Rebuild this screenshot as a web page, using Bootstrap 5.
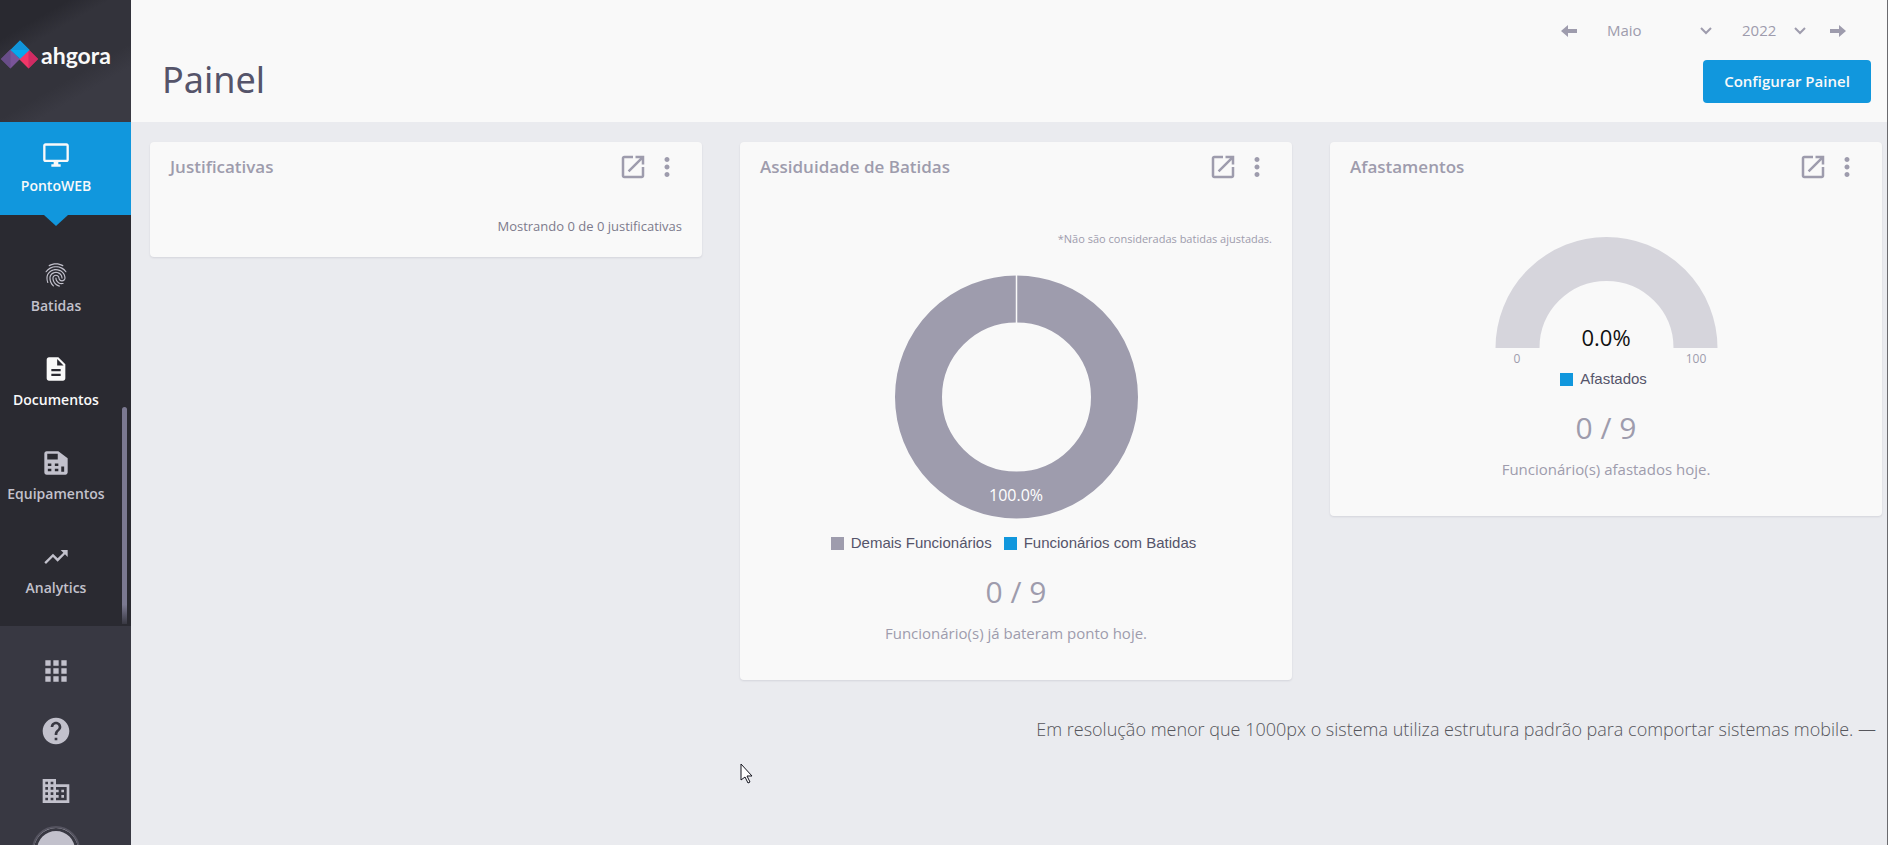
<!DOCTYPE html>
<html lang="pt-BR">
<head>
<meta charset="utf-8">
<meta name="viewport" content="width=device-width, initial-scale=1">
<title>Painel - Ahgora</title>
<link href="https://cdn.jsdelivr.net/npm/bootstrap@5.3.0/dist/css/bootstrap.min.css" rel="stylesheet">
<style>
:root { --brand: #1197dd; --muted: #9e9cad; --dark: #2a2a31; --panel: #383842; --light-icon: #c2c1cc; }
body { font-family: "Open Sans", "Noto Sans", sans-serif; background: #eaebef; color: var(--muted); font-size: 15px; line-height: 20px; }
.page { border-right: 1px solid #6b6b6f; }
a { text-decoration: none; }
.sidebar { width: 131px; background: var(--dark); }
.brand-box { height: 122px; background: linear-gradient(150deg, #292930 20%, #33333b 32%, #33333b 60%, #3a3a43 72%); padding: 0 0 12px 1px; }
.brand-name { fill: #f9f9f9; font: 700 23px Lato, sans-serif; }
.menu-item { height: 94px; padding: 19px 19px 0 0; font-size: 14px; font-weight: 600; color: var(--light-icon); gap: 7px; }
.menu-item svg, .tool-link svg { width: 28px; height: 28px; fill: currentColor; }
.menu-item.current { background: var(--brand); color: #f9f9f9; height: 93px; margin-bottom: 27px; }
.menu-item.current::after { content: ""; position: absolute; top: 100%; left: 44px; border: 12px solid transparent; border-top: 11px solid var(--brand); border-bottom: 0; }
.menu-item.bright { color: #f9f9f9; }
.scroll-thumb { width: 5px; top: 285px; bottom: 2px; right: 4px; border-radius: 3px 3px 0 0; background: linear-gradient(#7b7991 91%, #383842); }
.tools { background: var(--panel); height: 219px; padding: 15px 19px 0 0; }
.tool-link { height: 60px; flex: none; color: var(--light-icon); }
.tool-link .apps { width: 32px; height: 32px; }
.avatar { width: 48px; height: 48px; flex: none; border: 2px solid #54535f; border-radius: 50%; background: var(--light-icon); box-shadow: inset 0 0 0 3px var(--panel); margin-top: 5px; padding: 0; }
.topbar { background: #f9f9f9; height: 122px; padding: 18px 16px 18px 31px; }
.topbar h1 { font: 400 36px/48px "Noto Sans", sans-serif; color: #55546a; margin: 0; }
.period { gap: 30px; padding-right: 25px; }
.period button { border: 0; background: none; padding: 0; line-height: 0; color: var(--muted); }
.period svg { width: 16px; height: 16px; fill: currentColor; }
.period select { appearance: none; border: 0; padding: 0 0 2px; height: 26px; color: var(--muted); font-size: 15px; background: url("data:image/svg+xml,%3Csvg xmlns='http://www.w3.org/2000/svg' width='12' height='8'%3E%3Cpath d='M1 1l5 5 5-5' fill='none' stroke='%239e9cad' stroke-width='2'/%3E%3C/svg%3E") no-repeat right 9px; }
.month { width: 105px; }
.year { width: 64px; }
.period button:last-child { margin-left: -6px; }
.btn-brand { --bs-btn-bg: var(--brand); --bs-btn-color: #f9f9f9; --bs-btn-hover-bg: #0d84c3; --bs-btn-hover-color: #fff; height: 43px; width: 168px; padding: 0; border: 0; font-size: 15px; font-weight: 600; border-radius: 4px; }
.board { padding: 20px 5px 0 19px; gap: 38px; }
.widget { flex: 1 1 0; min-width: 0; background: #f9f9f9; border-radius: 4px; padding: 9px 20px 37px; box-shadow: 0 1px 2px rgba(60,60,80,.12); }
.widget-head { height: 32px; }
.widget h2 { font-size: 17px; line-height: 24px; font-weight: 600; margin: 0; }
.widget-head a, .widget-head button { color: var(--muted); border: 0; background: none; padding: 0; line-height: 0; }
.widget-head svg { width: 30px; height: 30px; fill: currentColor; }
.widget-head .actions { gap: 4px; }
.short { padding-bottom: 21px; }
.short p { font-size: 13px; margin: 33px 0 0; color: #7d7b8c; }
.hint { font-size: 11px; margin: 46px 0 0; }
.donut { width: 244px; height: 244px; margin: 26px 0 14px; }
.gauge { width: 224px; height: 132px; margin-top: 54px; }
.legend-row { font: 15px/20px "Liberation Sans", Arial, sans-serif; color: #55546a; gap: 12px; padding-right: 5px; }
.legend-row span { gap: 7px; }
.legend-row i { width: 13px; height: 13px; background: var(--muted); }
.legend-row i.blue { background: var(--brand); }
.total { font-size: 30px; line-height: 40px; margin-top: 19px; }
.caption-text { margin: 11px 0 0; }
.notice { font-size: 18px; font-weight: 300; line-height: 26px; color: #56565c; margin: 36px 11px 0 0; }
.pointer { left: 740px; top: 763px; width: 13px; height: 21px; }
</style>
</head>
<body>
<div class="page d-flex vh-100 overflow-hidden">
  <aside class="sidebar d-flex flex-column flex-shrink-0">
    <a href="#" class="brand-box d-flex align-items-center" aria-label="ahgora">
      <svg width="114" height="36" viewBox="0 0 114 36">
        <path d="M0 22l9.500-9.500L19 22l-9.500 9.500z" fill="#7a5499"/><path d="M9.500 12.500v19L0 22z" fill="#684d88"/>
        <path d="M18 22l9.500-9.500L37 22l-9.500 9.500z" fill="#f03768"/><path d="M27.500 12.500L37 22l-9.500 9.500z" fill="#d02b63"/>
        <path d="M9.500 13L19 3.500 28.500 13 19 22z" fill="#06a9ee"/><path d="M9.500 13L19 3.500 28.500 13z" fill="#1194d9"/>
        <text x="40" y="27" class="brand-name">ahgora</text>
      </svg>
    </a>
    <nav class="flex-grow-1 position-relative overflow-hidden">
      <a href="#" class="menu-item current position-relative d-flex flex-column align-items-center">
        <svg viewBox="0 0 24 24"><path d="M21 2H3c-1.100 0-2 .900-2 2v12c0 1.100.900 2 2 2h7v2H8v2h8v-2h-2v-2h7c1.100 0 2-.900 2-2V4c0-1.100-.900-2-2-2zm0 14H3V4h18v12z"/></svg>
        PontoWEB</a>
      <a href="#" class="menu-item d-flex flex-column align-items-center">
        <svg viewBox="0 0 24 24"><path d="M17.810 4.470c-.080 0-.160-.020-.230-.060C15.660 3.420 14 3 12.010 3c-1.980 0-3.860.470-5.570 1.410-.240.130-.540.040-.680-.200-.130-.240-.040-.550.200-.680C7.820 2.520 9.860 2 12.010 2c2.130 0 3.990.470 6.030 1.520.250.130.340.430.210.670-.090.180-.260.280-.440.280zM3.500 9.720c-.100 0-.200-.030-.290-.090-.230-.160-.280-.470-.120-.700.990-1.400 2.250-2.500 3.750-3.270C9.980 4.040 14 4.030 17.150 5.650c1.500.770 2.760 1.860 3.750 3.250.160.220.110.540-.120.700-.230.160-.540.110-.700-.120-.900-1.260-2.040-2.250-3.390-2.940-2.870-1.470-6.540-1.470-9.400.010-1.360.700-2.500 1.700-3.400 2.960-.080.140-.230.210-.390.210zm6.250 12.070c-.130 0-.260-.050-.350-.150-.870-.870-1.340-1.430-2.010-2.640-.690-1.230-1.050-2.730-1.050-4.340 0-2.970 2.540-5.390 5.660-5.390s5.660 2.420 5.660 5.390c0 .280-.220.500-.500.500s-.500-.220-.500-.500c0-2.420-2.090-4.390-4.660-4.390-2.570 0-4.660 1.970-4.660 4.390 0 1.440.320 2.770.930 3.850.640 1.150 1.080 1.640 1.850 2.420.190.200.190.510 0 .710-.110.100-.240.150-.370.150zm7.170-1.850c-1.190 0-2.240-.300-3.100-.890-1.490-1.010-2.380-2.650-2.380-4.390 0-.280.220-.500.500-.500s.500.220.500.500c0 1.410.720 2.740 1.940 3.560.710.480 1.540.710 2.540.710.240 0 .640-.030 1.040-.100.270-.050.530.130.580.410.050.270-.130.530-.410.580-.570.110-1.070.120-1.210.120zM14.910 22c-.040 0-.090-.010-.130-.020-1.590-.440-2.630-1.030-3.720-2.100-1.400-1.390-2.170-3.240-2.170-5.220 0-1.620 1.380-2.940 3.080-2.940 1.700 0 3.080 1.320 3.080 2.940 0 1.070.930 1.940 2.080 1.940s2.080-.870 2.080-1.940c0-3.770-3.250-6.830-7.250-6.830-2.840 0-5.440 1.580-6.610 4.030-.390.810-.590 1.760-.590 2.800 0 .780.070 2.010.670 3.610.100.260-.030.550-.290.640-.260.100-.550-.040-.640-.290-.490-1.310-.730-2.610-.730-3.960 0-1.200.230-2.290.680-3.240 1.330-2.790 4.280-4.600 7.510-4.600 4.550 0 8.250 3.510 8.250 7.830 0 1.620-1.380 2.940-3.080 2.940s-3.080-1.320-3.080-2.940c0-1.070-.930-1.940-2.080-1.940s-2.080.870-2.080 1.940c0 1.710.660 3.310 1.870 4.510.950.940 1.860 1.460 3.270 1.850.270.070.420.350.350.610-.050.230-.260.380-.470.380z"/></svg>
        Batidas</a>
      <a href="#" class="menu-item bright d-flex flex-column align-items-center">
        <svg viewBox="0 0 24 24"><path d="M14 2H6c-1.100 0-1.990.900-1.990 2L4 20c0 1.100.890 2 1.990 2H18c1.100 0 2-.900 2-2V8l-6-6zm2 16H8v-2h8v2zm0-4H8v-2h8v2zm-3-5V3.500L18.500 9H13z"/></svg>
        Documentos</a>
      <a href="#" class="menu-item d-flex flex-column align-items-center">
        <svg viewBox="0 0 24 24"><path fill-rule="evenodd" d="M4 2h10l8 6v12c0 1-.600 2-2 2H4c-1.200 0-2-.900-2-2V4c0-1.200.800-2 2-2zM4.500 4v5h9V4zM5 12.500v2h3v-2zm6 0v2h3v-2zM5 17v2h3v-2zm6 0v2h3v-2zm5.500-2v4.500H19V15z"/></svg>
        Equipamentos</a>
      <a href="#" class="menu-item d-flex flex-column align-items-center">
        <svg viewBox="0 0 24 24"><path d="M16 6l2.290 2.290-4.880 4.880-4-4L2 16.590 3.410 18l6-6 4 4 6.300-6.290L22 12V6z"/></svg>
        Analytics</a>
      <div class="scroll-thumb position-absolute"></div>
    </nav>
    <div class="tools d-flex flex-column align-items-center overflow-hidden">
      <a href="#" class="tool-link d-flex align-items-center" aria-label="Aplicativos"><svg class="apps" viewBox="0 0 24 24"><path d="M4 8h4V4H4v4zm6 12h4v-4h-4v4zm-6 0h4v-4H4v4zm0-6h4v-4H4v4zm6 0h4v-4h-4v4zm6-10v4h4V4h-4zm-6 4h4V4h-4v4zm6 6h4v-4h-4v4zm0 6h4v-4h-4v4z"/></svg></a>
      <a href="#" class="tool-link d-flex align-items-center" aria-label="Ajuda"><svg class="apps" viewBox="0 0 24 24"><path d="M12 2C6.480 2 2 6.480 2 12s4.480 10 10 10 10-4.480 10-10S17.520 2 12 2zm1 17h-2v-2h2v2zm2.070-7.750l-.900.920C13.450 12.900 13 13.500 13 15h-2v-.500c0-1.100.450-2.100 1.170-2.830l1.240-1.260c.370-.360.590-.860.590-1.410 0-1.100-.900-2-2-2s-2 .900-2 2H8c0-2.210 1.790-4 4-4s4 1.790 4 4c0 .880-.360 1.680-.930 2.250z"/></svg></a>
      <a href="#" class="tool-link d-flex align-items-center" aria-label="Empresa"><svg class="apps" viewBox="0 0 24 24"><path d="M12 7V3H2v18h20V7H12zM6 19H4v-2h2v2zm0-4H4v-2h2v2zm0-4H4V9h2v2zm0-4H4V5h2v2zm4 12H8v-2h2v2zm0-4H8v-2h2v2zm0-4H8V9h2v2zm0-4H8V5h2v2zm10 12h-8v-2h2v-2h-2v-2h2v-2h-2V9h8v10zm-2-8h-2v2h2v-2zm0 4h-2v2h2v-2z"/></svg></a>
      <button type="button" class="avatar" aria-label="Perfil"></button>
    </div>
  </aside>

  <main class="flex-grow-1">
    <header class="topbar d-flex justify-content-between align-items-start">
      <h1 class="align-self-end">Painel</h1>
      <div class="d-flex flex-column align-items-end gap-3">
        <div class="period d-flex align-items-center">
          <button type="button" aria-label="Mês anterior"><svg viewBox="0 0 16 16"><path d="M0 8l7-6v4h9v4H7v4z"/></svg></button>
          <select class="month" aria-label="Mês"><option>Maio</option></select>
          <select class="year" aria-label="Ano"><option>2022</option></select>
          <button type="button" aria-label="Próximo mês"><svg viewBox="0 0 16 16"><path d="M16 8L9 2v4H0v4h9v4z"/></svg></button>
        </div>
        <button type="button" class="btn btn-brand">Configurar Painel</button>
      </div>
    </header>

    <div class="board d-flex align-items-start">
      <section class="widget short">
        <div class="widget-head d-flex justify-content-between align-items-center">
          <h2>Justificativas</h2>
          <div class="actions d-flex">
            <a href="#" aria-label="Abrir"><svg viewBox="0 0 24 24"><path d="M19 19H5V5h7V3H5c-1.110 0-2 .900-2 2v14c0 1.100.890 2 2 2h14c1.100 0 2-.900 2-2v-7h-2v7zM14 3v2h3.590l-9.830 9.830 1.410 1.410L19 6.410V10h2V3h-7z"/></svg></a>
            <button type="button" aria-label="Opções"><svg viewBox="0 0 24 24"><path d="M12 8c1.100 0 2-.900 2-2s-.900-2-2-2-2 .900-2 2 .900 2 2 2zm0 2c-1.100 0-2 .900-2 2s.900 2 2 2 2-.900 2-2-.900-2-2-2zm0 6c-1.100 0-2 .900-2 2s.900 2 2 2 2-.900 2-2-.900-2-2-2z"/></svg></button>
          </div>
        </div>
        <p class="text-end">Mostrando 0 de 0 justificativas</p>
      </section>

      <section class="widget">
        <div class="widget-head d-flex justify-content-between align-items-center">
          <h2>Assiduidade de Batidas</h2>
          <div class="actions d-flex">
            <a href="#" aria-label="Abrir"><svg viewBox="0 0 24 24"><path d="M19 19H5V5h7V3H5c-1.110 0-2 .900-2 2v14c0 1.100.890 2 2 2h14c1.100 0 2-.900 2-2v-7h-2v7zM14 3v2h3.590l-9.830 9.830 1.410 1.410L19 6.410V10h2V3h-7z"/></svg></a>
            <button type="button" aria-label="Opções"><svg viewBox="0 0 24 24"><path d="M12 8c1.100 0 2-.900 2-2s-.900-2-2-2-2 .900-2 2 .900 2 2 2zm0 2c-1.100 0-2 .900-2 2s.900 2 2 2 2-.900 2-2-.900-2-2-2zm0 6c-1.100 0-2 .900-2 2s.900 2 2 2 2-.900 2-2-.900-2-2-2z"/></svg></button>
          </div>
        </div>
        <p class="hint text-end">*Não são consideradas batidas ajustadas.</p>
        <div class="d-flex flex-column align-items-center">
          <svg class="donut" viewBox="0 0 244 244">
            <circle cx="122.500" cy="122" r="98" fill="none" stroke="#9e9cad" stroke-width="47"/>
            <path d="M122.500 0v48" stroke="#f9f9f9" stroke-width="1.500"/>
            <text x="122" y="226" text-anchor="middle" font-size="16" fill="#fff">100.0%</text>
          </svg>
          <div class="legend-row d-flex">
            <span class="d-flex align-items-center"><i></i>Demais Funcionários</span>
            <span class="d-flex align-items-center"><i class="blue"></i>Funcionários com Batidas</span>
          </div>
          <div class="total">0 / 9</div>
          <p class="caption-text">Funcionário(s) já bateram ponto hoje.</p>
        </div>
      </section>

      <section class="widget">
        <div class="widget-head d-flex justify-content-between align-items-center">
          <h2>Afastamentos</h2>
          <div class="actions d-flex">
            <a href="#" aria-label="Abrir"><svg viewBox="0 0 24 24"><path d="M19 19H5V5h7V3H5c-1.110 0-2 .900-2 2v14c0 1.100.890 2 2 2h14c1.100 0 2-.900 2-2v-7h-2v7zM14 3v2h3.590l-9.830 9.830 1.410 1.410L19 6.410V10h2V3h-7z"/></svg></a>
            <button type="button" aria-label="Opções"><svg viewBox="0 0 24 24"><path d="M12 8c1.100 0 2-.900 2-2s-.900-2-2-2-2 .900-2 2 .900 2 2 2zm0 2c-1.100 0-2 .900-2 2s.900 2 2 2 2-.900 2-2-.900-2-2-2zm0 6c-1.100 0-2 .900-2 2s.900 2 2 2 2-.900 2-2-.900-2-2-2z"/></svg></button>
          </div>
        </div>
        <div class="d-flex flex-column align-items-center">
          <svg class="gauge" viewBox="0 0 224 132">
            <path d="M23.500 111a89 89 0 0 1 178 0" fill="none" stroke="#d6d5dc" stroke-width="44"/>
            <text x="112" y="109" text-anchor="middle" font-size="22" fill="#111">0.0%</text>
            <text x="23" y="126" text-anchor="middle" font-size="12" fill="#9e9cad">0</text>
            <text x="202" y="126" text-anchor="middle" font-size="12" fill="#9e9cad">100</text>
          </svg>
          <div class="legend-row d-flex">
            <span class="d-flex align-items-center"><i class="blue"></i>Afastados</span>
          </div>
          <div class="total">0 / 9</div>
          <p class="caption-text">Funcionário(s) afastados hoje.</p>
        </div>
      </section>
    </div>
    <p class="notice text-end">Em resolução menor que 1000px o sistema utiliza estrutura padrão para comportar sistemas mobile. —</p>
  </main>
</div>
<svg class="pointer position-absolute" viewBox="0 0 13 21"><path d="M1 1v16l4-3 3 6 2-1-3-6h5z" fill="#fff" stroke="#15151f"/></svg>
<script src="https://cdn.jsdelivr.net/npm/bootstrap@5.3.0/dist/js/bootstrap.bundle.min.js"></script>
</body>
</html>
